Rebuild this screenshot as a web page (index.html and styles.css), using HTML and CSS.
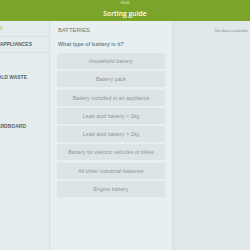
FILE: index.html
```html
<!DOCTYPE html>
<html>
<head>
<meta charset="utf-8">
<link rel="stylesheet" href="styles.css">
</head>
<body>
<div class="app">
  <header class="header">
    <div class="status">16:02</div>
    <div class="title">Sorting guide</div>
  </header>
  <div class="main">
    <nav class="nav">
      <div class="nav-item active i1">BATTERIES</div>
      <div class="nav-item i2">ELECTRICAL APPLIANCES</div>
      <div class="nav-item tall i3">HOUSEHOLD WASTE</div>
      <div class="nav-item tall i4">PAPER AND CARDBOARD</div>
    </nav>
    <section class="middle">
      <h2 class="cat">BATTERIES</h2>
      <p class="question">What type of battery is it?</p>
      <div class="options">
        <div class="opt">Household battery</div>
        <div class="opt">Battery pack</div>
        <div class="opt">Battery included in an appliance</div>
        <div class="opt">Lead-acid battery &lt; 2kg</div>
        <div class="opt">Lead-acid battery &gt; 2kg</div>
        <div class="opt">Battery for electric vehicles or bikes</div>
        <div class="opt">All other industrial batteries</div>
        <div class="opt">Engine battery</div>
      </div>
    </section>
    <section class="detail">
      <div class="nodata">No data available</div>
    </section>
  </div>
</div>
</body>
</html>
```
FILE: styles.css
```css
* { box-sizing: border-box; margin: 0; padding: 0; }
html, body { width: 250px; height: 250px; overflow: hidden; }
body { font-family: "Liberation Sans", Arial, sans-serif; background: #e6eef0; }
.app { display: flex; flex-direction: column; height: 250px; }
.header {
  height: 21px; background: #7ba42a; color: #fff;
  display: flex; flex-direction: column; align-items: center;
}
.status { font-size: 3.5px; line-height: 4px; margin-top: 1px; opacity: .9; }
.title { font-family: "Open Sans", sans-serif; font-weight: 600; font-size: 6.8px; line-height: 9px; margin-top: 4px; }
.main { flex: 1; display: flex; }
.nav {
  width: 50px; background: #e4ecee; border-right: 1px solid #d6dfe1;
  overflow: hidden; display: flex; flex-direction: column;
}
.nav-item {
  white-space: nowrap; font-weight: bold; font-size: 5px; color: #59656a;
  border-bottom: 1px solid #d9e2e4; height: 16px; line-height: 14px;
  display: flex; justify-content: flex-end;
}
.nav-item.active { color: #c3d12f; font-size: 6px; }
.i1 { padding-right: 46.5px; }
.i2 { padding-right: 17px; }
.i3 { height: 33px; padding-top: 17px; padding-right: 22px; border-bottom: none; }
.i4 { height: 49px; padding-top: 33px; padding-right: 23px; border-bottom: none; }
.middle {
  width: 123px; background: #e7eff1; border-right: 1px solid #d7dfe1;
  padding: 5px 7px 0 7px;
}
.cat { font-weight: normal; font-size: 6px; color: #6d7b80; padding-left: 1px; line-height: 8px; letter-spacing: -0.1px; }
.question { font-weight: bold; font-size: 5.4px; color: #75858a; padding-left: 1px; margin-top: 6px; line-height: 8px; }
.options { display: flex; flex-direction: column; gap: 2.3px; margin-top: 5px; }
.opt {
  height: 16px; background: #dce4e6; border-radius: 1px;
  display: flex; align-items: center; justify-content: center;
  font-size: 5.2px; letter-spacing: 0.1px; color: #8a979b; white-space: nowrap;
}
.detail { flex: 1; background: #dfe7e9; padding: 7px 2px 0 0; }
.nodata { text-align: right; font-size: 4.3px; color: #8b989c; line-height: 6px; }
```
